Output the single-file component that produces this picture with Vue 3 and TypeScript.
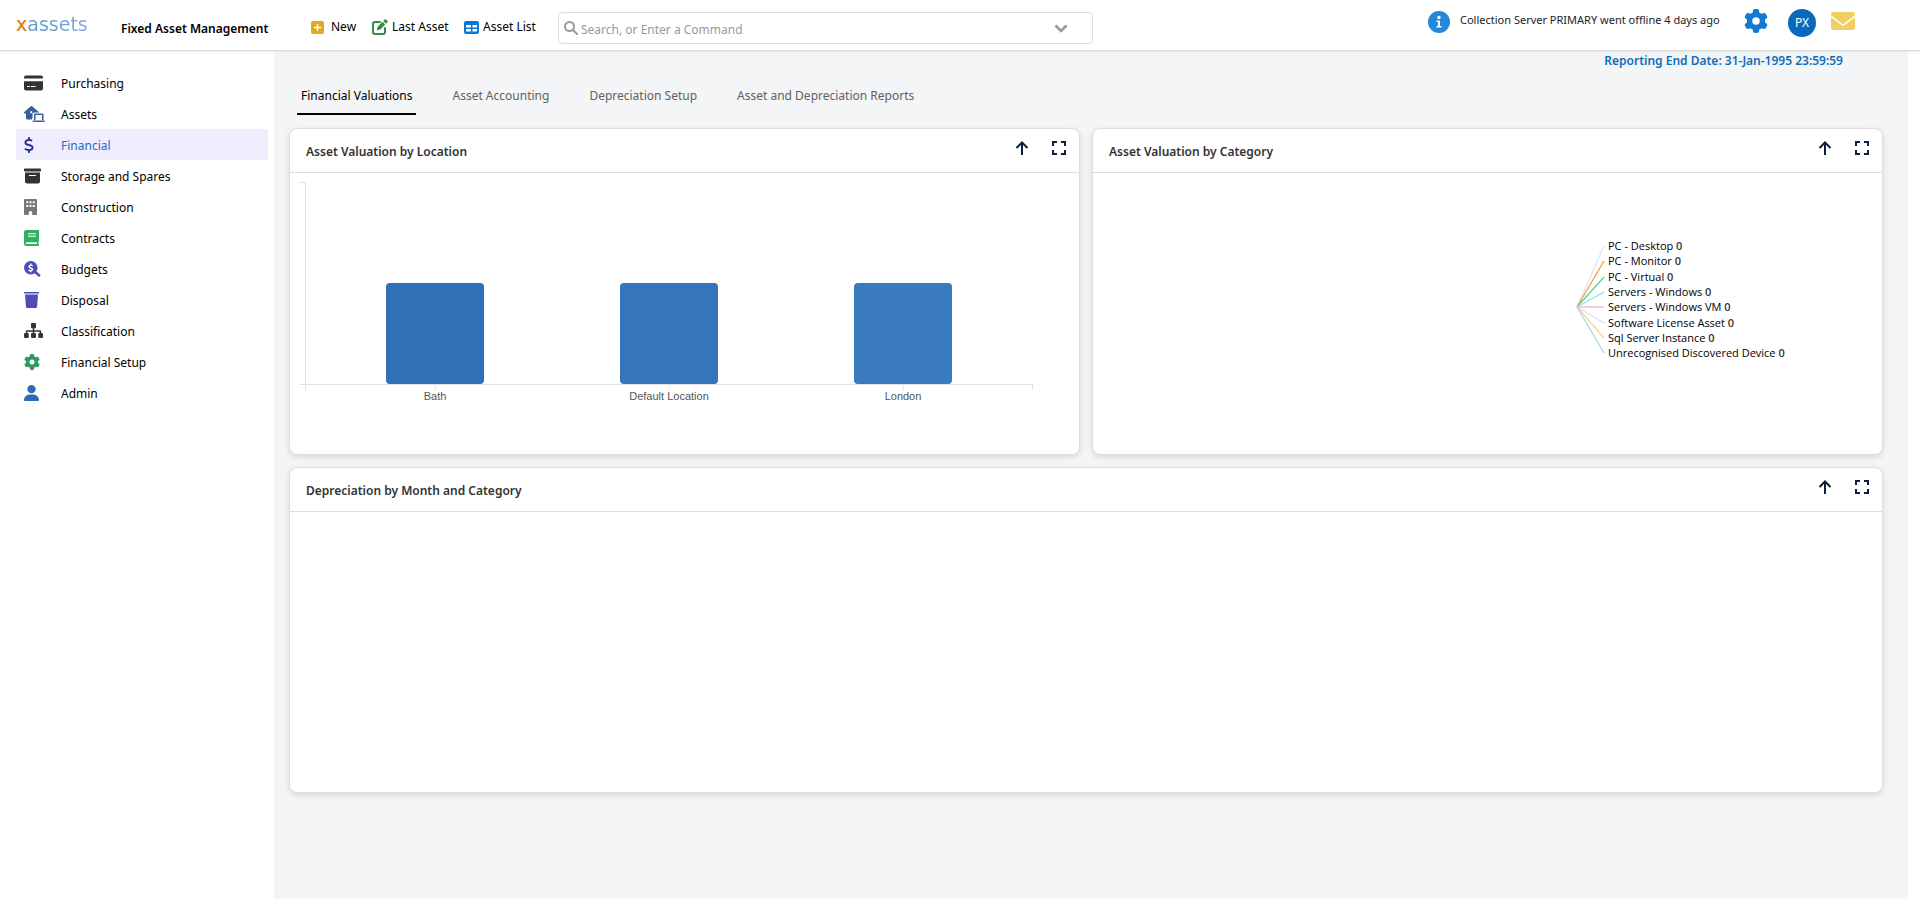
<script setup lang="ts">
import { ref } from 'vue'

interface NavItem {
  label: string
  color: string
  width: number
  d: string
}

const gear =
  'M495.9 166.6c3.2 8.7 .5 18.4-6.4 24.6l-43.3 39.4c1.1 8.3 1.7 16.8 1.7 25.4s-.6 17.1-1.7 25.4l43.3 39.4c6.9 6.2 9.6 15.9 6.4 24.6c-4.4 11.9-9.7 23.3-15.8 34.3l-4.7 8.1c-6.6 11-14 21.4-22.1 31.2c-5.9 7.2-15.7 9.6-24.5 6.8l-55.7-17.7c-13.4 10.3-28.2 18.9-44 25.4l-12.5 57.1c-2 9.1-9 16.3-18.2 17.8c-13.8 2.3-28 3.5-42.5 3.5s-28.7-1.2-42.5-3.5c-9.2-1.5-16.2-8.7-18.2-17.8l-12.5-57.1c-15.8-6.5-30.6-15.1-44-25.4L83.1 425.9c-8.8 2.8-18.6 .3-24.5-6.8c-8.1-9.8-15.5-20.2-22.1-31.2l-4.7-8.1c-6.1-11-11.4-22.4-15.8-34.3c-3.2-8.7-.5-18.4 6.4-24.6l43.3-39.4C64.6 273.1 64 264.6 64 256s.6-17.1 1.7-25.4L22.4 191.2c-6.9-6.2-9.6-15.9-6.4-24.6c4.4-11.9 9.7-23.3 15.8-34.3l4.7-8.1c6.6-11 14-21.4 22.1-31.2c5.9-7.2 15.7-9.6 24.5-6.8l55.7 17.7c13.4-10.3 28.2-18.9 44-25.4l12.5-57.1c2-9.1 9-16.3 18.2-17.8C227.3 1.2 241.5 0 256 0s28.7 1.2 42.5 3.5c9.2 1.5 16.2 8.7 18.2 17.8l12.5 57.1c15.8 6.5 30.6 15.1 44 25.4l55.7-17.7c8.8-2.8 18.6-.3 24.5 6.8c8.1 9.8 15.5 20.2 22.1 31.2l4.7 8.1c6.1 11 11.4 22.4 15.8 34.3zM256 336a80 80 0 1 0 0-160 80 80 0 1 0 0 160z'

const navItems: NavItem[] = [
  {
    label: 'Purchasing', color: '#333333', width: 608,
    d: 'M64 16C29 16 0 45 0 80v32h608V80c0-35-29-64-64-64H64zM608 200H0v232c0 35 29 64 64 64h480c35 0 64-29 64-64V200zM96 352h96v32H96zM224 352h144v32H224z',
  },
  {
    label: 'Assets', color: '#355e9b', width: 640,
    d: 'M218 10Q240 -6 262 10L470 190Q480 200 480 208H336Q272 208 272 262V400H250V432H104Q64 432 64 392V240H26Q8 240 2 224Q-4 206 10 194ZM200 168V232H264V168ZM352 240H592Q624 240 624 272V448H576V288H368V448H320V272Q320 240 352 240ZM272 464H672V472Q672 512 632 512H312Q272 512 272 472Z',
  },
  {
    label: 'Financial', color: '#2b2f9b', width: 320,
    d: 'M160 0c17.7 0 32 14.3 32 32V67.7c1.6 .2 3.1 .4 4.7 .7c.4 .1 .7 .1 1.1 .2l48 8.8c17.4 3.2 28.9 19.9 25.7 37.2s-19.9 28.9-37.2 25.7l-47.5-8.7c-31.3-4.6-58.9-1.5-78.3 6.2s-27.2 18.3-29 28.1c-2 10.7-.5 16.7 1.2 20.4c1.8 3.9 5.5 8.3 12.8 13.2c16.3 10.7 41.3 17.7 73.7 26.3l2.9 .8c28.6 7.6 63.6 16.8 89.6 33.8c14.2 9.3 27.6 21.9 35.9 39.5c8.5 17.9 10.3 37.9 6.4 59.2c-6.9 38-33.1 63.4-65.6 76.7c-13.7 5.6-28.6 9.2-44.4 11V480c0 17.7-14.3 32-32 32s-32-14.3-32-32V445.1c-.4-.1-.9-.1-1.3-.2c-24.4-3.8-64.5-14.3-91.5-26.3c-16.1-7.2-23.4-26.1-16.2-42.2s26.1-23.4 42.2-16.2c20.9 9.3 55.3 18.5 75.2 21.6c31.9 4.7 58.2 2 76-5.3c16.9-6.9 24.6-16.9 26.8-28.9c1.9-10.6 .4-16.7-1.3-20.4c-1.9-4-5.6-8.4-13-13.3c-16.4-10.7-41.5-17.7-74-26.3l-2.8-.7C119.4 279.3 84.4 270 58.4 253c-14.2-9.3-27.5-22-35.8-39.6c-8.4-17.9-10.1-37.9-6.1-59.2C23.7 116 52.3 91.2 84.8 78.3c13.3-5.3 27.9-8.9 43.2-11V32c0-17.7 14.3-32 32-32z',
  },
  {
    label: 'Storage and Spares', color: '#333333', width: 544,
    d: 'M32 16H512c18 0 32 14 32 32V80c0 18-14 32-32 32H32C14 112 0 98 0 80V48C0 30 14 16 32 16zm0 128H512V432c0 35-29 64-64 64H96c-35 0-64-29-64-64V144zm128 80V258H384V224z',
  },
  {
    label: 'Construction', color: '#777777', width: 416,
    d: 'M32 0Q0 0 0 32V480Q0 512 32 512H152V432Q152 384 208 384Q264 384 264 432V512H384Q416 512 416 480V32Q416 0 384 0ZM72 72H136V136H72ZM176 72H240V136H176ZM280 72H344V136H280ZM72 192H136V256H72ZM176 192H240V256H176ZM280 192H344V256H280Z',
  },
  {
    label: 'Contracts', color: '#2fb15f', width: 480,
    d: 'M72 0H480V384H460V448H480V512H72Q0 512 0 440V72Q0 0 72 0ZM128 104V134H384V104ZM128 184V214H384V184ZM88 390Q56 390 56 419Q56 448 88 448H412V390Z',
  },
  {
    label: 'Budgets', color: '#4c4cbc', width: 544,
    d: 'M216 0A216 216 0 1 0 216 432A216 216 0 0 0 340 392L480 510L536 456L398 330A216 216 0 0 0 216 0ZM194 80H238V116Q268 118 290 130L276 170Q200 144 184 172Q178 194 234 206Q300 222 296 278Q288 322 238 330V362H194V330Q158 328 132 312L148 272Q230 306 246 280Q252 258 204 246Q132 230 136 174Q146 128 194 116Z',
  },
  {
    label: 'Disposal', color: '#4c4cbc', width: 480,
    d: 'M16 0H464Q480 0 480 16V48H0V16Q0 0 16 0ZM32 76H448L420 464Q416 512 368 512H112Q64 512 60 464Z',
  },
  {
    label: 'Classification', color: '#333333', width: 608,
    d: 'M256 0H352Q384 0 384 32V136Q384 168 352 168H328V232H512Q552 232 552 272V320H568Q608 320 608 360V440Q608 480 568 480H496Q456 480 456 440V360Q456 320 496 320H504V280H328V320H344Q384 320 384 360V440Q384 480 344 480H264Q224 480 224 440V360Q224 320 264 320H280V280H104V320H112Q152 320 152 360V440Q152 480 112 480H40Q0 480 0 440V360Q0 320 40 320H56V272Q56 232 96 232H280V168H256Q224 168 224 136V32Q224 0 256 0Z',
  },
  { label: 'Financial Setup', color: '#2e9a5b', width: 512, d: gear },
  {
    label: 'Admin', color: '#2c69b8', width: 480,
    d: 'M240 0A132 132 0 1 0 240 264A132 132 0 1 0 240 0ZM190 304H290C400 304 480 390 480 482Q480 512 450 512H30Q0 512 0 482C0 390 80 304 190 304Z',
  },
]

const tabs = ['Financial Valuations', 'Asset Accounting', 'Depreciation Setup', 'Asset and Depreciation Reports']
const activeNav = ref('Financial')
const activeTab = ref(tabs[0])
const command = ref('')

const bars = [
  { label: 'Bath', value: 50, color: '#2f70b7' },
  { label: 'Default Location', value: 50, color: '#3575bb' },
  { label: 'London', value: 50, color: '#3a7abe' },
]

const categories = [
  { label: 'PC - Desktop', color: '#dfe5f5', y: 14 },
  { label: 'PC - Monitor', color: '#ff9a3c', y: 29 },
  { label: 'PC - Virtual', color: '#4bdc94', y: 45 },
  { label: 'Servers - Windows', color: '#92dfe9', y: 60 },
  { label: 'Servers - Windows VM', color: '#f2b0c6', y: 75 },
  { label: 'Software License Asset', color: '#e2dbf5', y: 91 },
  { label: 'Sql Server Instance', color: '#fdd488', y: 106 },
  { label: 'Unrecognised Discovered Device', color: '#a6d8e6', y: 121 },
]

const cards = [
  { title: 'Asset Valuation by Location', kind: 'bars' },
  { title: 'Asset Valuation by Category', kind: 'pie' },
  { title: 'Depreciation by Month and Category', kind: 'empty' },
]
</script>

<template>
  <div class="app">
    <header class="topbar">
      <a class="logo" href="#" aria-label="xassets home"><span>x</span>assets</a>
      <h1>Fixed Asset Management</h1>
      <div class="actions">
        <button type="button">
          <svg width="13" height="13" viewBox="0 0 13 13"><rect width="13" height="13" rx="2" fill="#dfa920" /><path d="M6.5 3.5v6M3.5 6.5h6" stroke="#fff" stroke-width="1.5" stroke-linecap="round" /></svg>
          <span class="wide">New</span>
        </button>
        <button type="button">
          <svg width="16" height="16" viewBox="0 0 16 16" fill="none"><path d="M8 3H3Q1 3 1 5v8q0 2 2 2h8q2 0 2-2V9" stroke="#388a48" stroke-width="2" stroke-linecap="round" /><path d="M12.5 .8q1-1 2 0l.7.7q1 1 0 2l-1.2 1.2-2.7-2.7zM10.5 2.8l2.7 2.7-4.9 4.9-3.5.8.8-3.5z" fill="#388a48" /></svg>
          <span>Last Asset</span>
        </button>
        <button type="button">
          <svg width="15" height="13" viewBox="0 0 15 13"><rect width="15" height="13" rx="2" fill="#0877d4" /><path d="M2 4h5v2.5H2zM8.5 4h4.5v2.5H8.5zM2 8h5v2.5H2zM8.5 8h4.5v2.5H8.5z" fill="#fff" /></svg>
          <span>Asset List</span>
        </button>
      </div>
      <div class="search">
        <svg width="14" height="14" viewBox="0 0 14 14" fill="none" stroke="#999" stroke-linecap="round"><circle cx="5.5" cy="5.5" r="4.5" stroke-width="2" /><path d="m9 9 4 4" stroke-width="2" /></svg>
        <input v-model="command" type="text" aria-label="Search, or Enter a Command" placeholder="Search, or Enter a Command">
        <button type="button" aria-label="Show commands">
          <svg width="14" height="9" viewBox="0 0 14 9" fill="none"><path d="m1.5 1.5 5.5 5.5 5.5-5.5" stroke="#999" stroke-width="2.5" /></svg>
        </button>
      </div>
      <div class="status">
        <svg class="info" width="22" height="22" viewBox="0 0 22 22"><circle cx="11" cy="11" r="11" fill="#2488d8" /><circle cx="11" cy="6.5" r="1.7" fill="#fff" /><path d="M8.5 9.5h3.5v5.5h1.5v1.5h-5v-1.5H10v-4H8.5z" fill="#fff" /></svg>
        <span class="notice">Collection Server PRIMARY went offline 4 days ago</span>
        <button class="settings" type="button" aria-label="Settings">
          <svg width="24" height="24" viewBox="0 0 512 512"><path :d="gear" fill="#1179d2" /></svg>
        </button>
        <button class="avatar" type="button">PX</button>
        <button class="mail" type="button" aria-label="Messages">
          <svg width="24" height="18" viewBox="0 64 512 384"><path d="M48 64C21 64 0 85 0 112c0 15 7 29 19 38L237 314c11 8 27 8 38 0L493 150c12-9 19-23 19-38c0-27-21-48-48-48H48zM0 176V400c0 27 21 48 48 48H464c27 0 48-21 48-48V176L294 339c-23 17-54 17-76 0L0 176z" fill="#f0cf60" /></svg>
        </button>
      </div>
    </header>

    <div class="body">
      <nav class="sidebar" aria-label="Main">
        <a
          v-for="item in navItems"
          :key="item.label"
          href="#"
          :class="{ active: item.label === activeNav }"
          @click.prevent="activeNav = item.label"
        >
          <span class="icon">
            <svg height="16" :width="Math.round(item.width / 32)" :viewBox="`0 0 ${item.width} 512`" overflow="visible"><path :d="item.d" :fill="item.color" fill-rule="evenodd" /></svg>
          </span>
          <span class="label">{{ item.label }}</span>
        </a>
      </nav>

      <main>
        <p class="period">Reporting End Date: 31-Jan-1995 23:59:59</p>
        <div class="tabs" role="tablist">
          <button
            v-for="tab in tabs"
            :key="tab"
            type="button"
            role="tab"
            :aria-selected="tab === activeTab"
            :class="{ active: tab === activeTab }"
            @click="activeTab = tab"
          >{{ tab }}</button>
        </div>

        <div class="cards">
          <section v-for="card in cards" :key="card.title" class="card" :class="{ full: card.kind === 'empty' }">
            <header>
              <h2>{{ card.title }}</h2>
              <button type="button" aria-label="Drill up">
                <svg width="14" height="14" viewBox="0 0 14 14" fill="none"><path d="M7 14V1.5M1.5 7 7 1.5 12.5 7" stroke="#0b1f3f" stroke-width="2" /></svg>
              </button>
              <button type="button" aria-label="Full screen">
                <svg width="14" height="14" viewBox="0 0 14 14" fill="none"><path d="M1 5V1h4M9 1h4v4M13 9v4H9M5 13H1V9" stroke="#0b1f3f" stroke-width="2" /></svg>
              </button>
            </header>

            <div v-if="card.kind === 'bars'" class="chart">
              <div class="plot">
                <div v-for="bar in bars" :key="bar.label" class="slot">
                  <div class="bar" :style="{ height: bar.value + '%', background: bar.color }"></div>
                </div>
              </div>
              <div class="axis">
                <span v-for="bar in bars" :key="bar.label">{{ bar.label }}</span>
              </div>
            </div>

            <div v-else-if="card.kind === 'pie'" class="pie">
              <svg width="210" height="136" viewBox="0 0 210 136">
                <g v-for="c in categories" :key="c.label">
                  <line x1="1" y1="75" x2="28" :y2="c.y" :stroke="c.color" stroke-width="1.3" />
                  <text x="32" :y="c.y + 4">{{ c.label }} <tspan class="count">0</tspan></text>
                </g>
              </svg>
            </div>
          </section>
        </div>
      </main>
    </div>
  </div>
</template>

<style>
body {
  margin: 0;
  background: #fff;
}
</style>

<style scoped>
.app {
  min-height: 100vh;
  display: flex;
  flex-direction: column;
  font-family: "Noto Sans", "Open Sans", sans-serif;
  font-size: 12px;
  line-height: 18px;
  color: #000;
}
.app *,
.app {
  box-sizing: border-box;
}
button {
  padding: 0;
  border: 0;
  background: none;
  font: inherit;
  color: inherit;
  cursor: pointer;
}
svg {
  display: block;
  flex: none;
}
.topbar {
  display: flex;
  height: 51px;
  border-bottom: 1px solid #dcdcdc;
  box-shadow: 0 1px 3px rgba(0, 0, 0, 0.08);
  background: #fff;
  position: relative;
}
.logo {
  width: 105px;
  margin-left: 16px;
  padding-top: 12px;
  font-family: "DejaVu Sans", sans-serif;
  font-size: 19px;
  line-height: 24px;
  text-decoration: none;
  color: transparent;
  background: linear-gradient(90deg, #5e9bbd 12px, #86a8e4 74px);
  background-clip: text;
}
.logo span {
  color: #ef7d12;
}
h1 {
  width: 190px;
  margin: 0;
  padding-top: 20px;
  font-size: 12px;
  font-weight: 600;
  line-height: 18px;
  white-space: nowrap;
}
.actions {
  display: grid;
  grid-template-columns: 61px 92px 94px;
  align-items: center;
  height: 54px;
}
.actions button {
  display: flex;
  align-items: center;
  gap: 4px;
  white-space: nowrap;
}
.actions .wide {
  padding-left: 3px;
}
.search {
  flex: 0 1 535px;
  display: flex;
  align-items: center;
  height: 32px;
  margin-top: 12px;
  padding: 0 24px 0 5px;
  border: 1px solid #dcdcdc;
  border-radius: 4px;
}
.search input {
  flex: 1;
  min-width: 0;
  padding: 3px 3px 0;
  border: 0;
  outline: 0;
  background: none;
  font: inherit;
  color: #333;
}
.search input::placeholder {
  color: #999;
  opacity: 1;
}
.status {
  display: flex;
  align-items: flex-start;
  margin-left: auto;
  padding: 9px 65px 0 16px;
}
.info {
  margin: 2px 10px 0 0;
}
.notice {
  width: 284px;
  padding-top: 2px;
  font-size: 11px;
  color: #222;
  white-space: nowrap;
}
.avatar {
  width: 28px;
  height: 28px;
  margin: 0 15px 0 20px;
  border-radius: 50%;
  background: #0869bd;
  color: #fff;
}
.mail {
  padding-top: 3px;
}
.body {
  flex: 1;
  display: flex;
}
.sidebar {
  width: 274px;
  flex: none;
  padding: 16px 6px 0 16px;
}
.sidebar a {
  display: flex;
  align-items: center;
  height: 31px;
  padding-left: 8px;
  color: #000;
  text-decoration: none;
}
.sidebar a.active {
  background: #efedfe;
  color: #2b6cb8;
}
.icon {
  width: 37px;
}
.label {
  padding-top: 2px;
}
main {
  flex: 1;
  min-width: 0;
  margin: 0 12px 12px 0;
  padding: 1px 25px 24px 15px;
  background: #f4f5f7;
}
.period {
  margin: 0;
  padding-right: 40px;
  text-align: right;
  font-weight: 600;
  color: #0f6cbd;
}
.tabs {
  display: flex;
  gap: 32px;
  height: 45px;
  margin: 0 0 13px 8px;
}
.tabs button {
  padding: 8px 4px 0;
  border-bottom: 2px solid transparent;
  color: #616161;
}
.tabs .active {
  border-bottom-color: #000;
  color: #000;
}
.cards {
  display: grid;
  grid-template-columns: 1fr 1fr;
  gap: 12px;
}
.card {
  min-height: 327px;
  border: 1px solid #dedede;
  border-radius: 8px;
  background: #fff;
  box-shadow: 0 2px 6px rgba(0, 0, 0, 0.12);
}
.card.full {
  grid-column: 1 / -1;
  min-height: 326px;
}
.card header {
  display: flex;
  align-items: center;
  gap: 23px;
  height: 44px;
  padding: 0 13px 0 16px;
  border-bottom: 1px solid #dedede;
}
h2 {
  flex: 1;
  margin: 2px 0 0;
  font-size: 12px;
  font-weight: 600;
  line-height: 18px;
  color: #333;
}
.card header button {
  padding-bottom: 6px;
}
.chart {
  padding: 9px 46px 0 9px;
}
.plot {
  display: flex;
  height: 203px;
  margin-left: 6px;
  padding: 0 13px 0 12px;
  border-left: 1px solid #e0e0e0;
  border-bottom: 1px solid #e0e0e0;
  position: relative;
}
.plot::before,
.plot::after {
  content: "";
  position: absolute;
  left: -7px;
  width: 6px;
  height: 1px;
  background: #e0e0e0;
}
.plot::before {
  top: 0;
}
.plot::after {
  bottom: -1px;
}
.slot {
  flex: 1;
  display: flex;
  align-items: flex-end;
  justify-content: center;
}
.bar {
  width: 42%;
  border-radius: 4px;
}
.axis {
  display: flex;
  margin-left: 6px;
  padding: 0 12px;
  border: solid #e0e0e0;
  border-width: 0 1px;
  height: 5px;
}
.axis span {
  flex: 1;
  padding-top: 2px;
  text-align: center;
  font-family: "Liberation Sans", Arial, sans-serif;
  font-size: 11px;
  color: #555;
  background: linear-gradient(#e8e8e8, #e8e8e8) center top / 1px 5px no-repeat;
}
.pie {
  display: grid;
  grid-template-columns: 61% auto;
  padding-top: 59px;
}
.pie svg {
  grid-column: 2;
  margin-left: 2px;
}
.pie text {
  font-family: "Open Sans", "Noto Sans", sans-serif;
  font-size: 11px;
  fill: #000;
}
.pie .count {
  font-weight: 600;
  fill: #333;
}
</style>
